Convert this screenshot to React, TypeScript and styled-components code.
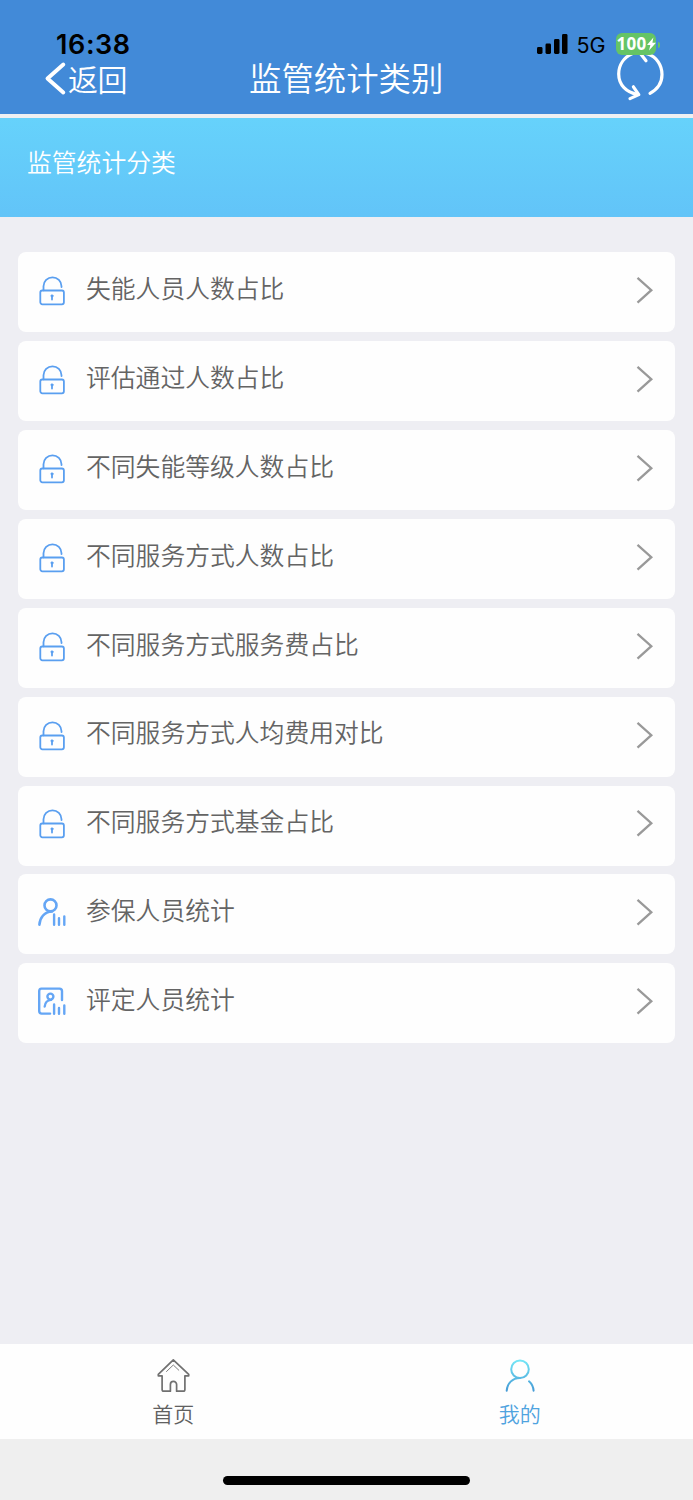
import React from "react";
import styled, { createGlobalStyle } from "styled-components";

const Global = createGlobalStyle`
  * { box-sizing: border-box; }
  body {
    margin: 0;
    background: #eeeef3;
    font-family: "Noto Sans CJK SC", sans-serif;
    font-weight: 350;
  }
`;

const Screen = styled.div`
  width: 693px;
  height: 1500px;
  display: flex;
  flex-direction: column;
  background: #eeeef3;
  overflow: hidden;
`;

const Header = styled.header`
  flex: none;
  height: 117.5px;
  background: #428ad8;
  border-bottom: 4px solid #eef0f2;
`;

const StatusBar = styled.div`
  height: 57px;
  padding: 31px 33px 0 56px;
  display: flex;
  justify-content: space-between;
  color: #000;
  font-family: Inter, sans-serif;
  position: relative;
  z-index: 1;
`;

const Clock = styled.span`
  font-size: 27px;
  font-weight: 600;
  line-height: 27px;
  letter-spacing: 0.6px;
`;

const Signals = styled.div`
  display: flex;
  align-items: flex-start;
`;

const Network = styled.span`
  margin: 1px 0 0 9px;
  width: 39px;
  font-size: 21.5px;
  font-weight: 400;
  line-height: 27px;
  white-space: nowrap;
`;

const Battery = styled.span`
  margin-top: 2px;
  width: 40.5px;
  height: 22px;
  border-radius: 6px;
  background: #65c466;
  color: #fff;
  display: flex;
  align-items: center;
  padding-left: 1px;
  font-family: "Open Sans", sans-serif;
  font-size: 17px;
  line-height: 22px;
  font-weight: 700;
  letter-spacing: 0.3px;
`;

const Nub = styled.span`
  margin: 10.5px 0 0 1.5px;
  width: 2.5px;
  height: 6px;
  border-radius: 0 3px 3px 0;
  background: #65c466;
`;

const NavBar = styled.nav`
  height: 56px;
  display: grid;
  grid-template-columns: 1fr auto 1fr;
  padding: 0 28px 0 44px;
  color: #fff;
`;

const Back = styled.div`
  display: flex;
  font-size: 30px;
  line-height: 32px;
  padding-top: 4.5px;
  letter-spacing: -0.4px;
`;

const BackArrow = styled.svg`
  flex: none;
  margin-top: -4.5px;
`;

const Title = styled.h1`
  margin: 0 1px 0 0;
  width: 210px;
  font-size: 32.4px;
  font-weight: 350;
  line-height: 40px;
  white-space: nowrap;
`;

const RefreshSlot = styled.div`
  display: flex;
  justify-content: flex-end;
  margin-top: -7px;
`;

const Banner = styled.section`
  flex: none;
  height: 99.5px;
  padding: 25px 27px;
  background: linear-gradient(#66d2fb, #62c4f8);
  color: #fff;
  font-size: 24.8px;
  line-height: 36px;
`;

const List = styled.main`
  flex: 1;
  padding: 35.4px 18px 0;
  display: flex;
  flex-direction: column;
  gap: 8.86px;
`;

const Row = styled.div`
  flex: none;
  height: 80px;
  border-radius: 8px;
  background: #fefefe;
  display: flex;
  align-items: flex-start;
  padding: 0 21px 0 20px;
`;

const RowIcon = styled.svg`
  flex: none;
  margin-top: 23.9px;
`;

const RowText = styled.span`
  flex: 1;
  margin: 16.7px 0 0 18px;
  font-size: 24.8px;
  line-height: 36px;
  color: #646464;
`;

const Arrow = styled.svg`
  flex: none;
  margin-top: 23.9px;
`;

const TabBar = styled.footer`
  flex: none;
  height: 95.4px;
  background: #fefefe;
  display: grid;
  grid-template-columns: 1fr 1fr;
`;

const Tab = styled.div<{ $active?: boolean }>`
  display: flex;
  flex-direction: column;
  align-items: center;
  padding-top: 13px;
  font-size: 21px;
  line-height: 30px;
  color: ${(p) => (p.$active ? "#4fa3df" : "#606060")};
`;

const TabLabel = styled.span`
  margin-top: 4px;
`;

const HomeArea = styled.div`
  flex: none;
  height: 60.6px;
  background: #efefef;
  display: flex;
  justify-content: center;
  padding-top: 37px;
`;

const HomeBar = styled.div`
  width: 247px;
  height: 9px;
  border-radius: 5px;
  background: #000;
`;

type IconKind = "lock" | "person" | "card";

const icons: Record<IconKind, React.ReactNode> = {
  lock: (
    <g stroke="#5a9ff0" strokeWidth="1.8">
      <path d="M5.5 14.3v-4a9 9 0 0 1 18 0v.8" />
      <rect x="2.3" y="14.5" width="23.6" height="13.8" rx="2" />
      <circle cx="14" cy="19.9" r="1.1" fill="#5a9ff0" strokeWidth="0.8" />
      <path d="M14 20v3.6" />
    </g>
  ),
  person: (
    <g stroke="#65a6f5" strokeWidth="2.6">
      <circle cx="12.5" cy="7.4" r="6" />
      <path d="M1.4 26.7C1.8 20 6 13.9 14 13.5" />
      <path d="M16.1 16.5V26.7M21 20.3V26.7M26.3 18.5V26.7" strokeWidth="2.4" />
    </g>
  ),
  card: (
    <g stroke="#65a6f5" strokeWidth="2.4">
      <path d="M24 13V4.1a2.5 2.5 0 0 0-2.5-2.5h-18A2.5 2.5 0 0 0 1.2 4.1v20a2.5 2.5 0 0 0 2.5 2.5h8.4" />
      <circle cx="12.4" cy="9.6" r="3" />
      <path d="M6.7 19.5c.3-3.6 2.8-6.4 6.3-6.6" />
      <path d="M16.1 17.5V26.7M21 21V26.7M26.3 18.5V26.7" />
    </g>
  ),
};

const rows: { icon: IconKind; label: string }[] = [
  { icon: "lock", label: "失能人员人数占比" },
  { icon: "lock", label: "评估通过人数占比" },
  { icon: "lock", label: "不同失能等级人数占比" },
  { icon: "lock", label: "不同服务方式人数占比" },
  { icon: "lock", label: "不同服务方式服务费占比" },
  { icon: "lock", label: "不同服务方式人均费用对比" },
  { icon: "lock", label: "不同服务方式基金占比" },
  { icon: "person", label: "参保人员统计" },
  { icon: "card", label: "评定人员统计" },
];

export default function App() {
  return (
    <Screen>
      <Global />
      <Header>
        <StatusBar>
          <Clock>16:38</Clock>
          <Signals>
            <svg width="31" height="24" viewBox="0 0 31 24">
              <rect x="0" y="16" width="5.5" height="7" rx="1.4" />
              <rect x="8.5" y="12.5" width="5.5" height="10.5" rx="1.4" />
              <rect x="17" y="8" width="5.5" height="15" rx="1.4" />
              <rect x="25" y="3" width="5.5" height="20" rx="1.4" />
            </svg>
            <Network>5G</Network>
            <Battery>
              100
              <svg width="9" height="14" viewBox="0 0 9 14" fill="#fff">
                <path d="M6.4 0.5L0 8h3.4L2 13.5 9 5.8H5.4z" />
              </svg>
            </Battery>
            <Nub />
          </Signals>
        </StatusBar>
        <NavBar>
          <Back>
            <BackArrow width="24" height="40" viewBox="0 0 24 40" fill="none" stroke="#fff" strokeWidth="3.9" strokeLinecap="round" strokeLinejoin="round">
              <path d="M19.3 7.5L3.5 21.5L19.3 35.5" />
            </BackArrow>
            返回
          </Back>
          <Title>监管统计类别</Title>
          <RefreshSlot>
            <svg width="50" height="54" viewBox="0 0 50 54" fill="none" stroke="#fff" strokeWidth="3.2" strokeLinecap="round" strokeLinejoin="round">
              <path d="M17 3.8C9 7.5 3.7 15 3.7 24C3.7 35 11.5 42.5 22.5 44.3" />
              <path d="M18.4 36.8L23.8 44.6L15 48.6" />
              <path d="M35 43.3C42 39.5 47 33 47 24.5C47 15 41.5 7 33 4C30.5 3.2 28 2.8 25 3L31 10.8" />
            </svg>
          </RefreshSlot>
        </NavBar>
      </Header>
      <Banner>监管统计分类</Banner>
      <List>
        {rows.map((row) => (
          <Row key={row.label}>
            <RowIcon width="30" height="30" viewBox="0 0 30 30" fill="none" strokeLinecap="round">
              {icons[row.icon]}
            </RowIcon>
            <RowText>{row.label}</RowText>
            <Arrow width="18" height="30" viewBox="0 0 18 30" fill="none" stroke="#999" strokeWidth="2.3">
              <path d="M1.5 1.8L15.3 14.2L1.5 26.6" />
            </Arrow>
          </Row>
        ))}
      </List>
      <TabBar>
        <Tab>
          <svg width="36" height="37" viewBox="0 0 36 37" fill="none" stroke="#707070" strokeWidth="1.7" strokeLinejoin="round" strokeLinecap="round">
            <path d="M18.3 2.8L3.3 17.3v1.5h3.8V32.5q0 1.7 1.7 1.7h6.6V27.5a3.1 3.1 0 0 1 6.2 0V34.2h6.6q1.7 0 1.7-1.7V18.8h3.8v-1.5Z" />
            <path d="M11.5 14.5L18.3 8l5.5 5.2" strokeWidth="0.9" />
          </svg>
          <TabLabel>首页</TabLabel>
        </Tab>
        <Tab $active>
          <svg width="36" height="37" viewBox="0 0 36 37" fill="none" stroke="url(#userTone)" strokeWidth="2" strokeLinecap="round">
            <defs>
              <linearGradient id="userTone" gradientUnits="userSpaceOnUse" x1="0" y1="3" x2="0" y2="34">
                <stop offset="0" stopColor="#74e6f6" />
                <stop offset="1" stopColor="#469bd6" />
              </linearGradient>
            </defs>
            <circle cx="18" cy="12.2" r="8.8" />
            <path d="M4.7 33.7C5.1 26.5 10.4 21 17.9 21" />
            <path d="M27 24.3c2.7 2.4 4.3 5.6 4.6 9.4" />
          </svg>
          <TabLabel>我的</TabLabel>
        </Tab>
      </TabBar>
      <HomeArea>
        <HomeBar />
      </HomeArea>
    </Screen>
  );
}
